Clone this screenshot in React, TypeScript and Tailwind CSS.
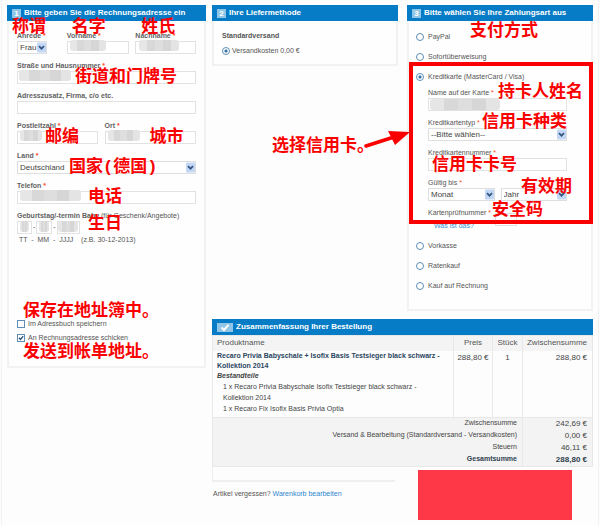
import React, { useState } from 'react';

type FieldProps = {
  id: string
  label: string
  required?: boolean
  bold?: boolean
  className?: string
  children: React.ReactNode
}

const Panel = ({ badge, title, className = "", children }: { badge: React.ReactNode, title: string, className?: string, children: React.ReactNode }): JSX.Element => (
  <section className={`self-start border-2 border-t-0 border-[#f2f2f2] bg-[#fefefe] ${className}`}>
    <h2 className="-mx-[2px] flex h-[16px] items-center gap-[3px] bg-[#067cc6] pl-[5px] text-[8px] font-bold text-white whitespace-nowrap">
      {badge}
      {title}
    </h2>
    {children}
  </section>
)

const Step = ({ n }: { n: number }): JSX.Element => (
  <span className="flex h-[9px] w-[9px] items-center justify-center bg-[#8fc6e8] text-[8px] leading-[9px]">{n}</span>
)

// handwritten translation lying over the form
const Note = ({ className, children }: { className: string, children: React.ReactNode }): JSX.Element => (
  <span lang="zh" className={`pointer-events-none absolute z-20 whitespace-nowrap font-['Liberation_Mono','Noto_Sans_CJK_SC',monospace] text-[17px] leading-[17px] font-bold text-[#fb0000] ${className}`}>
    {children}
  </span>
)

const Field = ({ id, label, required = true, bold = true, className = "", children }: FieldProps): JSX.Element => (
  <div className={`relative mb-[7px] ${className}`}>
    <label htmlFor={id} className={`block h-[10px] leading-[10px] whitespace-nowrap ${bold ? "font-bold text-[#626262]" : "text-[#555]"}`}>
      {label}
      {required && <span className="text-[#ff4a1c]"> *</span>}
    </label>
    {children}
  </div>
)

const TextBox = ({ id, className = "w-full", label }: { id: string, className?: string, label?: string }): JSX.Element => (
  <input id={id} type="text" aria-label={label} className={`block h-[13px] border border-[#e2e2e2] bg-white px-[2px] text-[8px] ${className}`} />
)

const Select = ({ id, value, label }: { id: string, value: string, label?: string }): JSX.Element => (
  <div className="relative">
    <select id={id} aria-label={label} className="block h-[13px] w-full appearance-none border border-[#dedede] bg-white pl-[2px] text-[8px] leading-[11px] text-[#444]">
      <option>{value}</option>
    </select>
    <svg viewBox="0 0 9 10" className="pointer-events-none absolute top-[1px] right-[1px] h-[11px] w-[9px]">
      <rect width="9" height="10" rx="1" fill="#c2d7f5" />
      <path d="M2 3.6 4.5 6.2 7 3.6" fill="none" stroke="#36557f" strokeWidth="1.7" />
    </svg>
  </div>
)

// blurred out private data
const Smudge = ({ className }: { className: string }): JSX.Element => (
  <span className={`pointer-events-none absolute z-10 flex h-[11px] overflow-hidden rounded-[3px] ${className}`}>
    <i className="flex-1 bg-[#e6e6e6]" />
    <i className="flex-1 bg-[#d8d8d8]" />
    <i className="flex-1 bg-[#dedede]" />
    <i className="flex-1 bg-[#d6d6d6]" />
    <i className="flex-1 bg-[#e4e4e4]" />
  </span>
)

const Radio = ({ name, label, checked, onChange, className = "gap-[4px]" }: { name: string, label: string, checked: boolean, onChange: () => void, className?: string }): JSX.Element => (
  <label className={`flex h-[10px] items-center whitespace-nowrap ${className}`}>
    <input
      type="radio"
      name={name}
      checked={checked}
      onChange={onChange}
      className="h-[8px] w-[8px] shrink-0 appearance-none rounded-full border border-[#5f8db5] bg-white checked:bg-[radial-gradient(circle,#2f6fa8_0_1px,#fff_2px)]"
    />
    {label}
  </label>
)

const CheckBox = ({ label, defaultChecked }: { label: string, defaultChecked?: boolean }): JSX.Element => (
  <label className="relative flex h-[10px] items-center gap-[3px]">
    <input type="checkbox" defaultChecked={defaultChecked} className="peer h-[8px] w-[8px] appearance-none border border-[#5f8db5] bg-white" />
    <svg viewBox="0 0 8 8" className="pointer-events-none absolute left-0 hidden h-[8px] w-[8px] peer-checked:block">
      <path d="M2 3.8 3.4 5.4 6.2 2.3" fill="none" stroke="#2c4f7a" strokeWidth="1.3" />
    </svg>
    {label}
  </label>
)

const totals = [
  { label: "Zwischensumme", value: "242,69 €" },
  { label: "Versand & Bearbeitung (Standardversand - Versandkosten)", value: "0,00 €" },
  { label: "Steuern", value: "46,11 €" },
]

const Address = (): JSX.Element => (
  <Panel badge={<Step n={1} />} title="Bitte geben Sie die Rechnungsadresse ein">
    <div className="px-[8px] pt-[10px] pb-[23px]">
      <div className="grid grid-cols-[44fr_63fr_61fr] gap-[6px]">
        <Field id="anrede" label="Anrede" className="mr-[14px]">
          <Select id="anrede" value="Frau" />
          <Note className="-left-[5px] -top-[12px]">称谓</Note>
        </Field>
        <Field id="vorname" label="Vorname">
          <TextBox id="vorname" />
          <Smudge className="top-[9px] left-[3px] w-[36px]" />
          <Note className="left-[5px] -top-[12px]">名字</Note>
        </Field>
        <Field id="nachname" label="Nachname">
          <TextBox id="nachname" />
          <Smudge className="top-[9px] left-[4px] w-[40px]" />
          <Note className="left-[6px] -top-[12px]">姓氏</Note>
        </Field>
      </div>
      <Field id="strasse" label="Straße und Hausnummer">
        <TextBox id="strasse" />
        <Smudge className="top-[9px] left-[2px] w-[52px]" />
        <Note className="left-[58px] top-[8px]">街道和门牌号</Note>
      </Field>
      <Field id="zusatz" label="Adresszusatz, Firma, c/o etc." required={false}>
        <TextBox id="zusatz" />
      </Field>
      <div className="grid grid-cols-[81fr_92fr] gap-[7px]">
        <Field id="plz" label="Postleitzahl">
          <TextBox id="plz" />
          <Smudge className="top-[9px] left-[3px] w-[22px]" />
          <Note className="left-[28px] top-[8px]">邮编</Note>
        </Field>
        <Field id="ort" label="Ort">
          <TextBox id="ort" />
          <Smudge className="top-[9px] left-[3px] w-[32px]" />
          <Note className="left-[45px] top-[8px]">城市</Note>
        </Field>
      </div>
      <Field id="land" label="Land">
        <Select id="land" value="Deutschland" />
        <Note className="left-[52px] top-[8px]">国家(德国)</Note>
      </Field>
      <Field id="telefon" label="Telefon">
        <TextBox id="telefon" />
        <Smudge className="top-[9px] left-[3px] w-[61px]" />
        <Note className="left-[71px] top-[8px]">电话</Note>
      </Field>
      <div className="relative">
        <label htmlFor="tag" className="block h-[10px] leading-[10px] whitespace-nowrap">
          <b className="text-[#626262]">Geburtstag/-termin Baby</b> (für Geschenk/Angebote)
        </label>
        <div className="flex items-center gap-[1px]">
          <TextBox id="tag" className="w-[15px]" />
          -
          <TextBox id="monat" label="Monat" className="w-[16px]" />
          -
          <TextBox id="jahr" label="Jahr" className="w-[23px]" />
        </div>
        <Smudge className="top-[10px] left-[3px] w-[9px]" />
        <Smudge className="top-[10px] left-[22px] w-[10px]" />
        <Smudge className="top-[10px] left-[41px] w-[20px]" />
        <p className="pl-[2px] leading-[12px] whitespace-pre">TT  -  MM  -  JJJJ    (z.B. 30-12-2013)</p>
        <Note className="left-[71px] top-[5px]">生日</Note>
      </div>
      <div className="relative mt-[73px] flex flex-col gap-[4px]">
        <Note className="left-[6px] -top-[16px]">保存在地址簿中。</Note>
        <CheckBox label="Im Adressbuch speichern" />
        <CheckBox label="An Rechnungsadresse schicken" defaultChecked />
        <Note className="left-[6px] top-[25px]">发送到帐单地址。</Note>
      </div>
    </div>
  </Panel>
)

const Payment = (): JSX.Element => {
  const [method, setMethod] = useState<string>("karte")

  return (
    <Panel badge={<Step n={3} />} title="Bitte wählen Sie Ihre Zahlungsart aus">
      <div className="relative flex flex-col gap-[10px] px-[7px] pt-[11px] pb-[18px]">
        <Note className="left-[61px] top-[2px]">支付方式</Note>
        <Radio name="zahlung" label="PayPal" checked={method === "paypal"} onChange={() => setMethod("paypal")} />
        <Radio name="zahlung" label="Sofortüberweisung" checked={method === "sofort"} onChange={() => setMethod("sofort")} />
        <div className="relative">
          <Radio name="zahlung" label="Kreditkarte (MasterCard / Visa)" checked={method === "karte"} onChange={() => setMethod("karte")} />
          <div className="mt-[6px] pr-[17px] pl-[12px]">
            <Field id="name" label="Name auf der Karte" bold={false}>
              <TextBox id="name" />
              <Smudge className="top-[11px] left-[2px] w-[70px]" />
              <Note className="left-[70px] -top-[4px]">持卡人姓名</Note>
            </Field>
            <Field id="typ" label="Kreditkartentyp" bold={false}>
              <Select id="typ" value="--Bitte wählen--" />
              <Note className="left-[54px] -top-[4px]">信用卡种类</Note>
            </Field>
            <Field id="nummer" label="Kreditkartennummer" bold={false}>
              <TextBox id="nummer" />
              <Note className="left-[4px] top-[9px]">信用卡卡号</Note>
            </Field>
            <Field id="gueltig" label="Gültig bis" bold={false}>
              <div className="grid grid-cols-2 gap-[6px]">
                <Select id="gueltig" value="Monat" />
                <Select id="gueltig-jahr" label="Jahr" value="Jahr" />
              </div>
              <Note className="left-[93px] top-[1px]">有效期</Note>
            </Field>
            <div className="relative flex h-[13px] gap-[4px] leading-[10px]">
              <label htmlFor="pruef" className="whitespace-nowrap">Kartenprüfnummer<span className="text-[#ff4a1c]"> *</span></label>
              <TextBox id="pruef" className="mt-[5px] w-[22px]" />
              <Note className="left-[64px] -top-[6px]">安全码</Note>
            </div>
            <a href="#" className="block pl-[6px] leading-[10px] text-[#3a8fd0]">Was ist das?</a>
          </div>
          <div className="pointer-events-none absolute -top-[10px] -right-[9px] bottom-[7px] -left-[7px] z-10 border-4 border-[#fb0000]" />
          <svg viewBox="0 0 46 18" className="pointer-events-none absolute top-[58px] -left-[52px] z-20 h-[18px] w-[46px]">
            <path d="M2 16 30 7" fill="none" stroke="#fb0000" strokeWidth="3.6" strokeLinecap="round" />
            <path d="M24 1 46 2 31 15Z" fill="#fb0000" />
          </svg>
          <Note className="top-[66px] -left-[144px]">选择信用卡。</Note>
        </div>
        <Radio name="zahlung" label="Vorkasse" checked={method === "vorkasse"} onChange={() => setMethod("vorkasse")} />
        <Radio name="zahlung" label="Ratenkauf" checked={method === "raten"} onChange={() => setMethod("raten")} />
        <Radio name="zahlung" label="Kauf auf Rechnung" checked={method === "rechnung"} onChange={() => setMethod("rechnung")} />
      </div>
    </Panel>
  )
}

const Summary = (): JSX.Element => (
  <section className="mt-[8px]">
    <h2 className="flex h-[16px] items-center gap-[3px] bg-[#067cc6] pl-[5px] text-[8px] font-bold text-white">
      <svg viewBox="0 0 16 9" className="h-[9px] w-[16px]">
        <rect width="16" height="9" fill="#8fc6e8" />
        <path d="M4.5 4.5 7 7 11.5 1.8" fill="none" stroke="#fff" strokeWidth="2" />
      </svg>
      Zusammenfassung Ihrer Bestellung
    </h2>
    <table className="w-full border-collapse border border-[#e8e8e8] text-[#444]">
      <thead className="bg-[#f4f4f4] text-[8px] text-[#555]">
        <tr className="h-[15px]">
          <th className="pl-[4px] text-left font-normal">Produktname</th>
          <th className="w-[39px] border-l border-[#e8e8e8] font-normal">Preis</th>
          <th className="w-[30px] border-l border-[#e8e8e8] font-normal">Stück</th>
          <th className="w-[70px] border-l border-[#e8e8e8] pr-[5px] text-right font-normal">Zwischensumme</th>
        </tr>
      </thead>
      <tbody>
        <tr className="align-top">
          <td className="pb-[3px] pl-[4px]">
            <p className="leading-[10px] font-bold text-[#2a4560]">Recaro Privia Babyschale + Isofix Basis Testsieger black schwarz -<br />Kollektion 2014</p>
            <p className="leading-[10px] font-bold italic">Bestandteile</p>
            <p className="pl-[6px] leading-[11px]">1 x Recaro Privia Babyschale Isofix Testsieger black schwarz -<br />Kollektion 2014</p>
            <p className="pl-[6px] leading-[11px]">1 x Recaro Fix Isofix Basis Privia Optia</p>
          </td>
          <td className="border-l border-[#e8e8e8] pt-[2px] text-center text-[8px] leading-[10px]">288,80 €</td>
          <td className="border-l border-[#e8e8e8] pt-[2px] text-center text-[8px] leading-[10px]">1</td>
          <td className="border-l border-[#e8e8e8] pt-[2px] pr-[5px] text-right text-[8px] leading-[10px]">288,80 €</td>
        </tr>
      </tbody>
      <tfoot className="border-t border-[#e8e8e8] bg-[#f3f3f3] text-right">
        {totals.map(t => (
          <tr key={t.label} className="h-[12px]">
            <td colSpan={3} className="pr-[5px]">{t.label}</td>
            <td className="border-l border-[#e8e8e8] pr-[5px] text-[8px] leading-[12px]">{t.value}</td>
          </tr>
        ))}
        <tr className="h-[12px] font-bold text-[#2f3f4f]">
          <td colSpan={3} className="pr-[5px]">Gesamtsumme</td>
          <td className="border-l border-[#e8e8e8] pr-[5px] text-[8px] leading-[12px]">288,80 €</td>
        </tr>
      </tfoot>
    </table>
    <div className="flex justify-between">
      <div className="w-[183px]">
        <div className="h-[15px] border-b-2 border-l border-[#efefef]" />
        <p className="mt-[7px] pl-[1px] leading-[10px]">
          Artikel vergessen? <a href="#" className="text-[#2f86cf]">Warenkorb bearbeiten</a>
        </p>
      </div>
      <div className="mt-[3px] mr-[21px] h-[50px] w-[154px] bg-[#ff3848]" />
    </div>
  </section>
)

export default function App(): JSX.Element {
  const [shipping, setShipping] = useState<boolean>(true)

  return (
    <div className="bg-[#fdfdfd] font-['Liberation_Sans',Arial,sans-serif] text-[7px] text-[#555]">
      <form className="mx-px grid min-h-screen grid-cols-[199fr_381fr] items-start gap-[6px] border-x border-[#f1f1f1] px-[5px] pt-[5px]">
        <Address />
        <div>
          <div className="grid grid-cols-2 gap-[9px]">
            <Panel badge={<Step n={2} />} title="Ihre Liefermethode">
              <div className="px-[8px] pt-[10px] pb-[6px]">
                <p className="leading-[10px] font-bold">Standardversand</p>
                <div className="mt-[5px] pb-[2px]">
                  <Radio className="gap-[2px]" name="versand" label="Versandkosten 0,00 €" checked={shipping} onChange={() => setShipping(true)} />
                </div>
              </div>
            </Panel>
            <Payment />
          </div>
          <Summary />
        </div>
      </form>
    </div>
  );
}
